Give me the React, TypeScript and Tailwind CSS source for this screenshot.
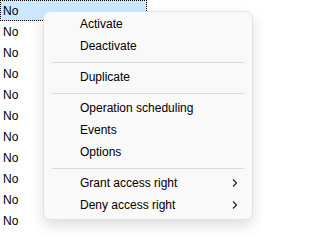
const rows = Array.from({ length: 11 }, () => 'No');

type Item = { label: string; sub?: boolean } | 'sep';

const menu: Item[] = [
  { label: 'Activate' },
  { label: 'Deactivate' },
  'sep',
  { label: 'Duplicate' },
  'sep',
  { label: 'Operation scheduling' },
  { label: 'Events' },
  { label: 'Options' },
  'sep',
  { label: 'Grant access right', sub: true },
  { label: 'Deny access right', sub: true },
];

function Chevron() {
  return (
    <svg width="6" height="8" viewBox="0 0 6 8" fill="none" className="text-[#222]">
      <path d="M1 0.5 L4.5 4 L1 7.5" stroke="currentColor" strokeWidth="1.2" />
    </svg>
  );
}

export default function App() {
  return (
    <div
      className="relative h-[235px] w-[272px] overflow-hidden bg-white text-[12px] text-black"
      style={{ fontFamily: '"Segoe UI", "Liberation Sans", Arial, sans-serif' }}
    >
      <div className="flex w-[147px] flex-col">
        {rows.map((r, i) => (
          <div
            key={i}
            className={
              i === 0
                ? 'flex h-[21px] items-center border border-dotted border-black bg-[#cce8ff] pl-[2px]'
                : 'flex h-[21px] items-center pl-[3px]'
            }
          >
            {r}
          </div>
        ))}
      </div>

      <div className="absolute left-[43px] top-[11px] w-[210px] rounded-[7px] border border-[#e3e3e3] bg-[#f9f9f9] pt-px pb-[3px] shadow-[0_6px_14px_rgba(0,0,0,0.13)]">
        {menu.map((m, i) =>
          m === 'sep' ? (
            <div key={i} className="mx-2 mt-[5px] mb-[3px] h-px bg-[#dadada]" />
          ) : (
            <div key={i} className="flex h-[22px] items-center justify-between pl-[36px] pr-[14px]">
              <span>{m.label}</span>
              {m.sub && <Chevron />}
            </div>
          ),
        )}
      </div>
    </div>
  );
}
